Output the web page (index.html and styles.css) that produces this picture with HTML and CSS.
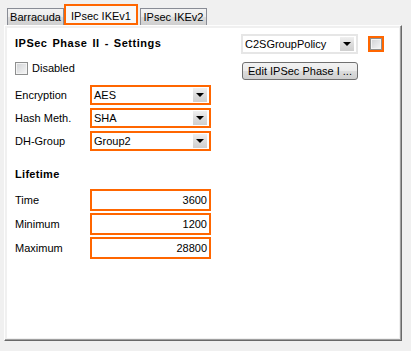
FILE: index.html
```html
<!DOCTYPE html>
<html lang="en">
<head>
    <meta charset="UTF-8">
    <title>IPsec IKEv1</title>
    <link rel="stylesheet" href="styles.css">
</head>
<body>
    <div class="tabs">
        <div class="tab tab-first">Barracuda</div>
        <div class="tab active">IPsec IKEv1</div>
        <div class="tab tab-last">IPsec IKEv2</div>
    </div>
    <div class="page">
        <div class="inner">
            <div class="left">
                <div class="heading title">IPSec Phase II - Settings</div>
                <div class="check-row"><span class="checkbox"></span>Disabled</div>

                <div class="row row-first">
                    <span class="label">Encryption</span>
                    <div class="combo marked"><span class="value">AES</span><span class="arrow"></span></div>
                </div>
                <div class="row">
                    <span class="label">Hash Meth.</span>
                    <div class="combo marked"><span class="value">SHA</span><span class="arrow"></span></div>
                </div>
                <div class="row">
                    <span class="label">DH-Group</span>
                    <div class="combo marked"><span class="value">Group2</span><span class="arrow"></span></div>
                </div>

                <div class="heading lifetime">Lifetime</div>
                <div class="row tall row-time">
                    <span class="label">Time</span>
                    <div class="textbox">3600</div>
                </div>
                <div class="row tall">
                    <span class="label">Minimum</span>
                    <div class="textbox">1200</div>
                </div>
                <div class="row tall">
                    <span class="label">Maximum</span>
                    <div class="textbox">28800</div>
                </div>
            </div>

            <div class="right">
                <div class="policy-row">
                    <div class="combo plain"><span class="value">C2SGroupPolicy</span><span class="arrow"></span></div>
                    <div class="mark-box"><span class="checkbox"></span></div>
                </div>
                <button class="btn">Edit IPSec Phase I ...</button>
            </div>
        </div>
    </div>
</body>
</html>
```

FILE: styles.css
```css
body {
    margin: 0;
    background-color: #f0f0f0;
    color: #000;
    font-family: "Liberation Sans", Arial, sans-serif;
    font-size: 11px;
}

/* Tab strip */
.tabs {
    display: flex;
    align-items: flex-end;
    height: 25px;
    padding-left: 7px;
}
.tab {
    box-sizing: border-box;
    height: 17px;
    line-height: 16px;
    text-align: center;
    border: 1px solid #898c95;
    border-bottom: none;
    background: linear-gradient(#f3f3f3, #ebebeb 50%, #dddddd 50%, #cfcfcf);
}
.tab-first {
    width: 57px;
}
.tab-last {
    width: 67px;
    margin-left: 2px;
}
.tab.active {
    width: 74px;
    height: 21px;
    line-height: 13px;
    padding-top: 4px;
    border: 2px solid #ff6600;
    background: #f8f8f8;
}

/* Page */
.page {
    box-sizing: border-box;
    width: 398px;
    height: 316px;
    margin-left: 4px;
    padding: 2px;
    border: 1px solid;
    border-color: #fdfdfd #696969 #696969 #fdfdfd;
    box-shadow: inset -1px -1px 0 #a0a0a0;
    background-color: #f0f0f0;
}
.inner {
    display: flex;
    height: 100%;
    box-sizing: border-box;
    padding: 7px 0 0 8px;
    background-color: #fff;
}
.left {
    width: 196px;
}
.right {
    margin-left: 30px;
}

.heading {
    font-weight: bold;
    height: 16px;
    line-height: 16px;
    letter-spacing: 0.3px;
}
.title {
    letter-spacing: 0.5px;
    word-spacing: 1.5px;
}
.lifetime {
    margin-top: 15px;
}

.check-row {
    display: flex;
    align-items: center;
    gap: 4px;
    height: 14px;
    margin-top: 10px;
}
.checkbox {
    box-sizing: border-box;
    width: 13px;
    height: 13px;
    border: 1px solid #8e8f8f;
    box-shadow: inset 0 0 0 1px #f4f4f4;
    background: linear-gradient(135deg, #cfd1d4, #f7f7f7);
}

/* Form rows */
.row {
    display: flex;
    align-items: center;
    height: 20px;
    margin-top: 3px;
}
.row-first {
    margin-top: 10px;
}
.row.tall {
    height: 22px;
    margin-top: 2px;
}
.row.row-time {
    margin-top: 7px;
}
.label {
    width: 75px;
}

.combo {
    box-sizing: border-box;
    display: flex;
    align-items: center;
    background-color: #fff;
}
.combo.marked {
    width: 121px;
    height: 20px;
    border: 2px solid #ff6600;
}
.combo.plain {
    width: 117px;
    height: 20px;
    border: 2px solid #e6e6e6;
}
.value {
    padding-left: 2px;
}
.arrow {
    position: relative;
    width: 14px;
    height: 14px;
    margin-left: auto;
    margin-right: 2px;
    background: linear-gradient(#f0f0f0, #dcdcdc 50%, #cfcfcf);
}
.arrow::after {
    content: "";
    position: absolute;
    left: 3px;
    top: 5px;
    border-left: 4px solid transparent;
    border-right: 4px solid transparent;
    border-top: 4px solid #000;
}

.textbox {
    box-sizing: border-box;
    width: 121px;
    height: 22px;
    line-height: 18px;
    padding-right: 2px;
    text-align: right;
    border: 2px solid #ff6600;
    background-color: #fff;
}

/* Right column */
.policy-row {
    display: flex;
    align-items: center;
    margin-top: -1px;
}
.mark-box {
    box-sizing: border-box;
    width: 16px;
    height: 16px;
    margin-left: 10px;
    border: 2px solid #ff6600;
}
.mark-box .checkbox {
    display: block;
    width: 12px;
    height: 12px;
}
.btn {
    display: block;
    box-sizing: border-box;
    width: 116px;
    height: 18px;
    margin: 8px 0 0 1px;
    padding: 0;
    border: 1px solid #707070;
    border-radius: 3px;
    background: linear-gradient(#f2f2f2, #ebebeb 50%, #dddddd 50%, #cfcfcf);
    font-family: "Liberation Sans", Arial, sans-serif;
    font-size: 11px;
    color: #000;
}
```
